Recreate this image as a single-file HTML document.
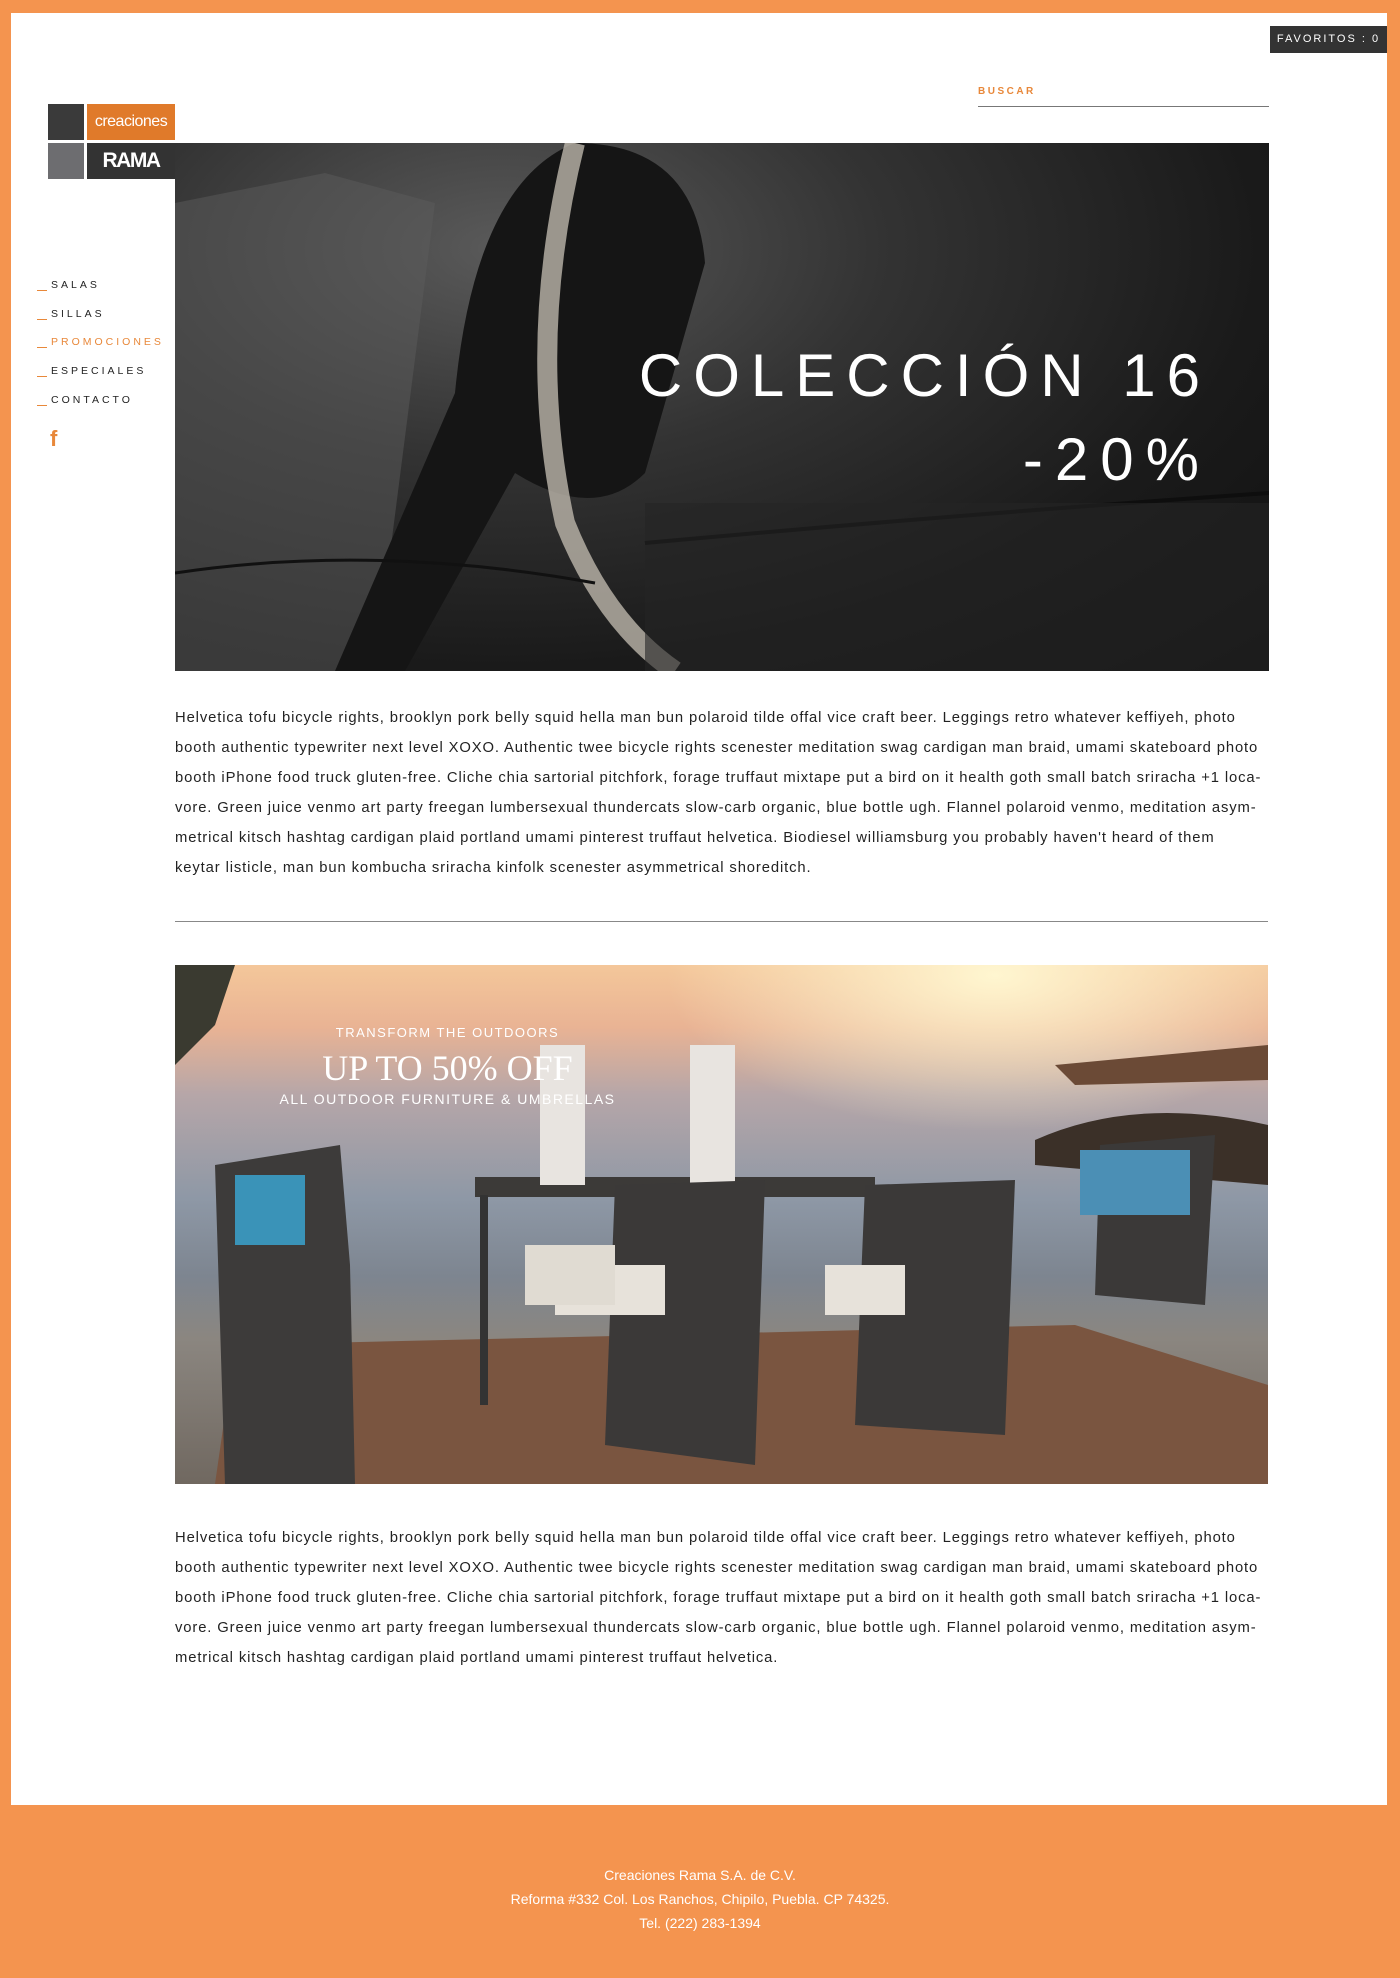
<!DOCTYPE html>
<html><head><meta charset="utf-8"><style>
*{margin:0;padding:0;box-sizing:border-box}
body{width:1400px;height:1978px;background:#f4944f;position:relative;font-family:"Liberation Sans",sans-serif;overflow:hidden}
.white{position:absolute;left:11px;top:13px;width:1376px;height:1792px;background:#fff}
.abs{position:absolute}
.fav{left:1270px;top:26px;width:117px;height:27px;background:#333;color:#fff;font-size:11px;letter-spacing:2px;line-height:27px;text-align:center}
.buscar{left:978px;top:86px;color:#e8883a;font-size:10px;letter-spacing:2.5px;font-weight:bold}
.bline{left:978px;top:106px;width:291px;height:1px;background:#777}
.nav{left:37px;font-size:10.5px;letter-spacing:3px;color:#222}
.nav span{display:inline-block;width:10px;height:1px;background:#e8883a;margin-right:4px;vertical-align:-3px}
.p{left:175px;width:1095px;font-size:14.8px;letter-spacing:0.88px;line-height:30px;color:#222;white-space:nowrap}
.hero{left:175px;top:143px;width:1094px;height:528px;background:radial-gradient(ellipse at 30% 20%,#5a5a5a 0%,#333 35%,#1a1a1a 70%,#101010 100%);overflow:hidden}
.foot{left:0;width:1400px;text-align:center;color:#fff;font-size:14px}
</style></head><body>
<div class="white"></div>
<div class="abs fav">FAVORITOS : 0</div>
<div class="abs buscar">BUSCAR</div>
<div class="abs bline"></div>
<div class="abs" style="left:48px;top:104px;width:36px;height:36px;background:#3a3a3a"></div>
<div class="abs" style="left:87px;top:104px;width:88px;height:36px;background:#e07a2a;color:#fff;font-size:16px;line-height:36px;text-align:center;letter-spacing:-0.5px">creaciones</div>
<div class="abs" style="left:48px;top:143px;width:36px;height:36px;background:#6d6d70"></div>
<div class="abs" style="left:87px;top:143px;width:88px;height:36px;background:#333;color:#fff;font-size:21px;font-weight:bold;line-height:36px;text-align:center;letter-spacing:-1.5px">RAMA</div>
<div class="abs nav" style="top:279px"><span></span>SALAS</div>
<div class="abs nav" style="top:308px"><span></span>SILLAS</div>
<div class="abs nav" style="top:336px;color:#e8883a"><span></span>PROMOCIONES</div>
<div class="abs nav" style="top:365px"><span></span>ESPECIALES</div>
<div class="abs nav" style="top:394px"><span></span>CONTACTO</div>
<div class="abs" style="left:50px;top:426px;color:#e8883a;font-size:22px;font-weight:bold">f</div>
<div class="abs hero">
<svg width="1094" height="528" style="position:absolute;left:0;top:0">
<path d="M0 60 L150 30 L260 60 L200 528 L0 528Z" fill="#5c5c5c" opacity="0.5"/>
<path d="M400 0 Q520 0 530 120 L470 330 Q420 380 340 330 L230 528 L160 528 L280 250 Q300 40 400 0Z" fill="#151515"/>
<path d="M400 0 Q350 200 390 380 Q430 480 500 528" stroke="#bdb6ab" stroke-width="20" fill="none" opacity="0.8"/>
<path d="M0 430 Q200 400 420 440" stroke="#111" stroke-width="3" fill="none"/>
<path d="M470 400 Q800 370 1094 350" stroke="#0e0e0e" stroke-width="4" fill="none"/>
<rect x="470" y="360" width="624" height="168" fill="#252525" opacity="0.6"/>
</svg>
<div style="position:absolute;right:58px;top:198px;color:#fff;font-size:60px;letter-spacing:11px;line-height:70px;text-align:right">COLECCIÓN 16</div>
<div style="position:absolute;right:58px;top:282px;color:#fff;font-size:60px;letter-spacing:12px;line-height:70px;text-align:right">-20%</div>
</div>
<div class="abs p" style="top:703px">Helvetica tofu bicycle rights, brooklyn pork belly squid hella man bun polaroid tilde offal vice craft beer. Leggings retro whatever keffiyeh, photo<br>booth authentic typewriter next level XOXO. Authentic twee bicycle rights scenester meditation swag cardigan man braid, umami skateboard photo<br>booth iPhone food truck gluten-free. Cliche chia sartorial pitchfork, forage truffaut mixtape put a bird on it health goth small batch sriracha +1 loca-<br>vore. Green juice venmo art party freegan lumbersexual thundercats slow-carb organic, blue bottle ugh. Flannel polaroid venmo, meditation asym-<br>metrical kitsch hashtag cardigan plaid portland umami pinterest truffaut helvetica. Biodiesel williamsburg you probably haven't heard of them<br>keytar listicle, man bun kombucha sriracha kinfolk scenester asymmetrical shoreditch.</div>
<div class="abs" style="left:175px;top:921px;width:1093px;height:1px;background:#888"></div>
<div class="abs" style="left:175px;top:965px;width:1093px;height:519px;overflow:hidden;background:linear-gradient(180deg,#f4c79a 0%,#e9b394 12%,#b6a6a8 25%,#8e98a6 45%,#7d8590 60%,#8b8680 72%,#706860 100%)">
<svg width="1093" height="519" style="position:absolute;left:0;top:0">
<defs><radialGradient id="sun" cx="0.75" cy="0.02" r="0.3"><stop offset="0" stop-color="#fff6d0"/><stop offset="1" stop-color="#fff6d0" stop-opacity="0"/></radialGradient></defs>
<rect width="1093" height="519" fill="url(#sun)"/>
<path d="M880 100 L1093 80 L1093 115 L900 120Z" fill="#6b4a36"/>
<path d="M860 175 Q960 130 1093 160 L1093 220 L860 200Z" fill="#3b3028"/>
<path d="M0 0 L60 0 L40 60 L0 100Z" fill="#3a3a30"/>
<path d="M60 380 L900 360 L1093 420 L1093 519 L40 519Z" fill="#7a5540"/>
<rect x="300" y="212" width="400" height="20" fill="#3c3a38"/>
<rect x="305" y="230" width="8" height="210" fill="#333"/><rect x="690" y="230" width="8" height="190" fill="#333"/>
<rect x="365" y="80" width="45" height="140" fill="#e8e4e0"/><rect x="515" y="80" width="45" height="140" fill="#e8e4e0"/>
<path d="M40 200 L165 180 L175 300 L180 520 L50 520Z" fill="#3d3b3a"/>
<rect x="60" y="210" width="70" height="70" fill="#3a93b8"/>
<path d="M440 220 L590 215 L580 500 L430 480Z" fill="#3b3938"/>
<rect x="380" y="300" width="110" height="50" fill="#e7e2da"/>
<path d="M690 220 L840 215 L830 470 L680 460Z" fill="#3b3938"/>
<rect x="650" y="300" width="80" height="50" fill="#e7e2da"/>
<path d="M925 180 L1040 170 L1030 340 L920 330Z" fill="#3b3938"/>
<rect x="905" y="185" width="110" height="65" fill="#4b8fb5"/>
<rect x="350" y="280" width="90" height="60" fill="#e0dbd2"/>
</svg>
<div style="position:absolute;left:0;width:545px;top:60px;text-align:center;color:#fff;font-size:13px;letter-spacing:1.5px">TRANSFORM THE OUTDOORS</div>
<div style="position:absolute;left:0;width:545px;top:82px;text-align:center;color:#fff;font-family:'Liberation Serif',serif;font-size:36px">UP TO 50% OFF</div>
<div style="position:absolute;left:0;width:545px;top:126px;text-align:center;color:#fff;font-size:14px;letter-spacing:1.5px">ALL OUTDOOR FURNITURE &amp; UMBRELLAS</div>
</div>
<div class="abs p" style="top:1523px">Helvetica tofu bicycle rights, brooklyn pork belly squid hella man bun polaroid tilde offal vice craft beer. Leggings retro whatever keffiyeh, photo<br>booth authentic typewriter next level XOXO. Authentic twee bicycle rights scenester meditation swag cardigan man braid, umami skateboard photo<br>booth iPhone food truck gluten-free. Cliche chia sartorial pitchfork, forage truffaut mixtape put a bird on it health goth small batch sriracha +1 loca-<br>vore. Green juice venmo art party freegan lumbersexual thundercats slow-carb organic, blue bottle ugh. Flannel polaroid venmo, meditation asym-<br>metrical kitsch hashtag cardigan plaid portland umami pinterest truffaut helvetica.</div>
<div class="abs foot" style="top:1867px">Creaciones Rama S.A. de C.V.</div>
<div class="abs foot" style="top:1891px">Reforma #332 Col. Los Ranchos, Chipilo, Puebla. CP 74325.</div>
<div class="abs foot" style="top:1915px">Tel. (222) 283-1394</div>
</body></html>
